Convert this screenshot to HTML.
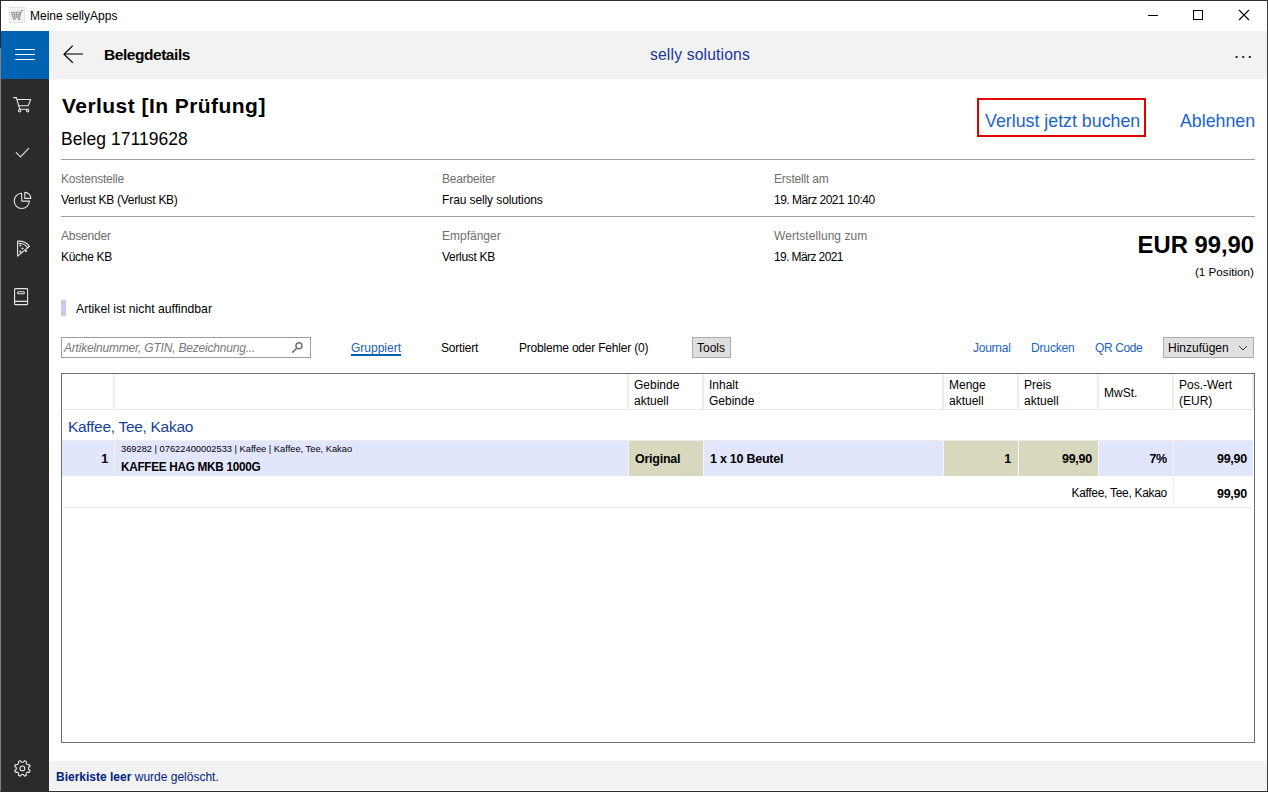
<!DOCTYPE html>
<html><head><meta charset="utf-8">
<style>
*{margin:0;padding:0;box-sizing:border-box}
html,body{width:1268px;height:792px;overflow:hidden;background:#fff}
body{position:relative;font-family:"Liberation Sans",sans-serif;color:#000}
.a{position:absolute}
.t{position:absolute;white-space:nowrap;line-height:1}
.hl{position:absolute;height:1px;background:#a0a0a0}
.vl{position:absolute;width:1px}
.lb{font-size:12px;letter-spacing:-0.2px;color:#6e6e6e}
.vv{font-size:12px;letter-spacing:-0.3px}
.th{font-size:12px;line-height:16px;color:#000}
.b13{font-size:12.5px;font-weight:700;letter-spacing:-0.25px}
</style></head>
<body>
<!-- window border -->
<div class="a" style="left:0;top:0;width:1268px;height:1px;background:#2f2f2f"></div>
<div class="a" style="left:0;top:0;width:1px;height:48px;background:#2a2a2a"></div><div class="a" style="left:0;top:48px;width:1px;height:744px;background:#808080"></div>
<div class="a" style="left:1267px;top:0;width:1px;height:792px;background:#3a3a3a"></div>
<div class="a" style="left:0;top:791px;width:1268px;height:1px;background:#2f2f2f"></div>

<!-- title bar -->
<div class="t" style="left:30px;top:10px;font-size:12px;color:#000">Meine sellyApps</div>
<div class="a" style="left:1148px;top:15px;width:10px;height:1px;background:#000"></div>
<div class="a" style="left:1193px;top:10px;width:10px;height:10px;border:1px solid #000"></div>
<svg class="a" style="left:1238px;top:9px" width="12" height="12" viewBox="0 0 12 12"><path d="M1 1L11 11M11 1L1 11" stroke="#000" stroke-width="1.1"/></svg>

<!-- sidebar -->
<div class="a" style="left:1px;top:31px;width:48px;height:760px;background:#2b2b2b"></div>
<div class="a" style="left:1px;top:31px;width:48px;height:48px;background:#0063b1"></div>
<div class="a" style="left:15px;top:49px;width:20px;height:1px;background:#fff"></div>
<div class="a" style="left:15px;top:54px;width:20px;height:1px;background:#fff"></div>
<div class="a" style="left:15px;top:59px;width:20px;height:1px;background:#fff"></div>

<!-- header -->
<div class="a" style="left:49px;top:31px;width:1218px;height:48px;background:#f2f2f2"></div>
<svg class="a" style="left:62px;top:44px" width="22" height="20" viewBox="0 0 22 20"><path d="M21 10H2.5" fill="none" stroke="#3c3c3c" stroke-width="1.4"/><path d="M10.8 1.6L2 10.2L10.8 18.8" fill="none" stroke="#000" stroke-width="1.2"/></svg>
<div class="t" style="left:104px;top:47px;font-size:15.5px;font-weight:700;letter-spacing:-0.45px">Belegdetails</div>
<div class="t" style="left:650px;top:47px;font-size:15.7px;letter-spacing:0.15px;color:#17379c">selly solutions</div>
<svg class="a" style="left:1230px;top:50px" width="26" height="14" viewBox="1230 50 26 14"><g fill="#000"><circle cx="1236.6" cy="57" r="1.1"/><circle cx="1243.2" cy="57" r="1.1"/><circle cx="1249.8" cy="57" r="1.1"/></g></svg>


<!-- page content -->
<div class="t" style="left:62px;top:95px;font-size:21px;font-weight:700;letter-spacing:0.45px">Verlust [In Prüfung]</div>
<div class="t" style="left:61px;top:131px;font-size:17.5px;letter-spacing:0.05px">Beleg 17119628</div>
<div class="a" style="left:977px;top:98px;width:169px;height:39px;border:2px solid #e00000"></div>
<div class="t" style="left:985px;top:113px;font-size:17.8px;color:#1a64c8">Verlust jetzt buchen</div>
<div class="t" style="left:1180px;top:113px;font-size:17.8px;color:#1a64c8">Ablehnen</div>
<div class="hl" style="left:61px;top:159px;width:1194px"></div>

<div class="t lb" style="left:61px;top:173px">Kostenstelle</div>
<div class="t vv" style="left:61px;top:194px">Verlust KB (Verlust KB)</div>
<div class="t lb" style="left:442px;top:173px">Bearbeiter</div>
<div class="t vv" style="left:442px;top:194px;letter-spacing:-0.1px">Frau selly solutions</div>
<div class="t lb" style="left:774px;top:173px">Erstellt am</div>
<div class="t vv" style="left:774px;top:194px;letter-spacing:-0.5px">19. März 2021 10:40</div>
<div class="hl" style="left:61px;top:216px;width:1194px"></div>

<div class="t lb" style="left:61px;top:230px">Absender</div>
<div class="t vv" style="left:61px;top:251px">Küche KB</div>
<div class="t lb" style="left:442px;top:230px;letter-spacing:0px">Empfänger</div>
<div class="t vv" style="left:442px;top:251px">Verlust KB</div>
<div class="t lb" style="left:774px;top:230px;letter-spacing:0.05px">Wertstellung zum</div>
<div class="t vv" style="left:774px;top:251px;letter-spacing:-0.6px">19. März 2021</div>
<div class="t" style="right:14px;top:233px;font-size:23.8px;font-weight:700">EUR 99,90</div>
<div class="t" style="right:14px;top:266px;font-size:11.7px">(1 Position)</div>

<div class="a" style="left:61px;top:300px;width:5px;height:16px;background:#c9c9f7"></div>
<div class="t" style="left:76px;top:303px;font-size:12.2px">Artikel ist nicht auffindbar</div>

<!-- toolbar -->
<div class="a" style="left:61px;top:337px;width:250px;height:21px;border:1px solid #9b9ca1"></div>
<div class="t" style="left:64px;top:342px;font-size:12px;letter-spacing:-0.2px;font-style:italic;color:#77787c">Artikelnummer, GTIN, Bezeichnung...</div>
<svg class="a" style="left:290px;top:340px" width="14" height="14" viewBox="0 0 14 14"><circle cx="9" cy="5.8" r="3" fill="none" stroke="#707070" stroke-width="1.5"/><path d="M6.8 8L2.3 12.6" stroke="#707070" stroke-width="1.6"/></svg>
<div class="t" style="left:351px;top:342px;font-size:12px;color:#1c5fb8">Gruppiert</div>
<div class="a" style="left:351px;top:354px;width:50px;height:2px;background:#0063b1"></div>
<div class="t" style="left:441px;top:342px;font-size:12px;letter-spacing:-0.2px">Sortiert</div>
<div class="t" style="left:519px;top:342px;font-size:12px;letter-spacing:-0.2px">Probleme oder Fehler (0)</div>
<div class="a" style="left:692px;top:337px;width:39px;height:21px;background:#dedede;border:1px solid #adadad"></div>
<div class="t" style="left:697px;top:342px;font-size:12px">Tools</div>
<div class="t" style="left:973px;top:342px;font-size:12px;letter-spacing:-0.25px;color:#1a64c8">Journal</div>
<div class="t" style="left:1031px;top:342px;font-size:12px;letter-spacing:-0.15px;color:#1a64c8">Drucken</div>
<div class="t" style="left:1095px;top:342px;font-size:12px;letter-spacing:-0.4px;color:#1a64c8">QR Code</div>
<div class="a" style="left:1163px;top:337px;width:91px;height:21px;background:#e0e0e0;border:1px solid #adadad"></div>
<div class="t" style="left:1168px;top:342px;font-size:12px">Hinzufügen</div>
<svg class="a" style="left:1238px;top:345px" width="10" height="7" viewBox="0 0 10 7"><path d="M1 1L5 5L9 1" fill="none" stroke="#333" stroke-width="1"/></svg>

<!-- table -->
<div class="a" style="left:61px;top:373px;width:1194px;height:370px;border:1px solid #6e7077"></div>
<div class="hl" style="left:62px;top:409px;width:1191px;background:#e8e8e8"></div>
<div class="vl" style="left:113px;top:374px;height:35px;width:2px;background:#ededed"></div>
<div class="vl" style="left:627px;top:374px;height:35px;width:2px;background:#ededed"></div>
<div class="vl" style="left:702px;top:374px;height:35px;width:2px;background:#ededed"></div>
<div class="vl" style="left:942px;top:374px;height:35px;width:2px;background:#ededed"></div>
<div class="vl" style="left:1017px;top:374px;height:35px;width:2px;background:#ededed"></div>
<div class="vl" style="left:1097px;top:374px;height:35px;width:2px;background:#ededed"></div>
<div class="vl" style="left:1172px;top:374px;height:35px;width:2px;background:#ededed"></div>
<div class="vl" style="left:1252px;top:374px;height:35px;width:2px;background:#ededed"></div>

<div class="t th" style="left:634px;top:377px">Gebinde<br>aktuell</div>
<div class="t th" style="left:709px;top:377px">Inhalt<br>Gebinde</div>
<div class="t th" style="left:949px;top:377px">Menge<br>aktuell</div>
<div class="t th" style="left:1024px;top:377px">Preis<br>aktuell</div>
<div class="t th" style="left:1104px;top:385px">MwSt.</div>
<div class="t th" style="left:1179px;top:377px">Pos.-Wert<br>(EUR)</div>

<div class="t" style="left:68px;top:419px;font-size:15.5px;letter-spacing:-0.3px;color:#1a3f98">Kaffee, Tee, Kakao</div>
<div class="hl" style="left:62px;top:440px;width:1191px;background:#ececec"></div>

<!-- item row -->
<div class="a" style="left:62px;top:441px;width:1191px;height:35px;background:#e2e6fd"></div>

<div class="a" style="left:629px;top:441px;width:74px;height:35px;background:#d8d8bf"></div>
<div class="a" style="left:944px;top:441px;width:74px;height:35px;background:#d8d8bf"></div>
<div class="a" style="left:1019px;top:441px;width:79px;height:35px;background:#d8d8bf"></div>
<div class="vl" style="left:114px;top:441px;height:35px;background:#f6f6f6"></div><div class="vl" style="left:628px;top:441px;height:35px;background:#f6f6f6"></div><div class="vl" style="left:703px;top:441px;height:35px;background:#f6f6f6"></div><div class="vl" style="left:943px;top:441px;height:35px;background:#f6f6f6"></div><div class="vl" style="left:1018px;top:441px;height:35px;background:#f6f6f6"></div><div class="vl" style="left:1098px;top:441px;height:35px;background:#f6f6f6"></div><div class="vl" style="left:1173px;top:441px;height:35px;background:#f6f6f6"></div>
<div class="t b13" style="right:1160px;top:453px">1</div>
<div class="t" style="left:121px;top:445px;font-size:9.3px">369282 | 07622400002533 | Kaffee | Kaffee, Tee, Kakao</div>
<div class="t b13" style="left:121px;top:461px;letter-spacing:-0.3px;transform:scaleX(0.94);transform-origin:0 0">KAFFEE HAG MKB 1000G</div>
<div class="t b13" style="left:635px;top:453px">Original</div>
<div class="t b13" style="left:710px;top:453px">1 x 10 Beutel</div>
<div class="t b13" style="right:257px;top:453px">1</div>
<div class="t b13" style="right:176px;top:453px">99,90</div>
<div class="t b13" style="right:101px;top:453px">7%</div>
<div class="t b13" style="right:21px;top:453px">99,90</div>

<!-- subtotal -->
<div class="vl" style="left:1173px;top:476px;height:31px;background:#ececec"></div>
<div class="t" style="right:101px;top:487px;font-size:12px;letter-spacing:-0.3px">Kaffee, Tee, Kakao</div>
<div class="t b13" style="right:21px;top:488px">99,90</div>
<div class="hl" style="left:62px;top:507px;width:1191px;background:#ececec"></div>


<!-- sidebar icons -->
<svg class="a" style="left:0;top:0" width="50" height="792" viewBox="0 0 50 792">
<g fill="none" stroke="#e6e6e6" stroke-width="1.1" stroke-linejoin="round" stroke-linecap="round">
<path d="M13.6 97.6H16.4L19.8 109.3H28.6"/>
<path d="M17.1 99.5H30.7L28.2 105.8H18.9"/>
<circle cx="19.6" cy="110.7" r="1.2"/>
<circle cx="27.6" cy="110.7" r="1.2"/>
<path d="M16.2 152.6L20.5 156.8L28.6 148.4"/>
<path d="M21.6 193.3A7.6 7.6 0 1 0 29.4 201.1H21.8Z"/>
<path d="M24.8 192.4V198.4H30.8A6 6 0 0 0 24.8 192.4Z"/>
<path d="M17.6 241.2V256.2L28.4 247.2"/>
<path d="M17.6 241.2Q25.5 240.6 29.4 246.4L28.4 247.2"/>
<path d="M18.6 243.2Q24.6 243.2 27.6 247.8"/>
<rect x="14.6" y="288.6" width="13" height="16" rx="0.8"/>
<path d="M14.6 301.4H27.6"/>
<rect x="17.6" y="291.8" width="6.8" height="2" rx="1"/>
<path d="M30.12 770.51 L29.35 772.36 L27.36 772.12 L26.12 773.36 L26.36 775.35 L24.51 776.12 L23.27 774.54 L21.53 774.54 L20.29 776.12 L18.44 775.35 L18.68 773.36 L17.44 772.12 L15.45 772.36 L14.68 770.51 L16.26 769.27 L16.26 767.53 L14.68 766.29 L15.45 764.44 L17.44 764.68 L18.68 763.44 L18.44 761.45 L20.29 760.68 L21.53 762.26 L23.27 762.26 L24.51 760.68 L26.36 761.45 L26.12 763.44 L27.36 764.68 L29.35 764.44 L30.12 766.29 L28.54 767.53 L28.54 769.27Z"/>
<circle cx="22.4" cy="768.4" r="2.4"/>
</g>
<g fill="#e6e6e6">
<path d="M20.4 244.2L21.6 245.5L20.4 246.8L19.1 245.5Z"/>
<path d="M22.5 247.2L23.8 248.5L22.5 249.8L21.2 248.5Z"/>
<path d="M20.4 250.3L21.6 251.6L20.4 252.9L19.1 251.6Z"/>
<circle cx="26" cy="251" r="1.1"/>
</g>
</svg>
<!-- app icon -->
<svg class="a" style="left:9px;top:7px" width="16" height="16" viewBox="0 0 16 16">
<rect x="0.5" y="0.5" width="15" height="15" fill="#f4f4f4" stroke="#e2e2e2"/>
<g fill="none" stroke="#999" stroke-width="1.1">
<path d="M2.3 5L3.9 10.3H10.7L12.3 4.1Q12.8 3.2 14.2 3.2"/>
<path d="M5 5L5.9 10.3M7.6 5V10.3M10.3 5L9.6 10.3M2.4 5.2H12.1M3.1 7.7H11.4"/>
</g>
<g fill="#8c8c8c"><rect x="4" y="11.4" width="2.6" height="1.4"/><rect x="8.8" y="11.4" width="2.6" height="1.4"/></g>
</svg>

<!-- status bar -->
<div class="a" style="left:49px;top:761px;width:1218px;height:29px;background:#f2f2f2"></div>
<div class="t" style="left:56px;top:771px;font-size:12px;color:#00227f"><b>Bierkiste leer</b> wurde gelöscht.</div>

</body></html>
